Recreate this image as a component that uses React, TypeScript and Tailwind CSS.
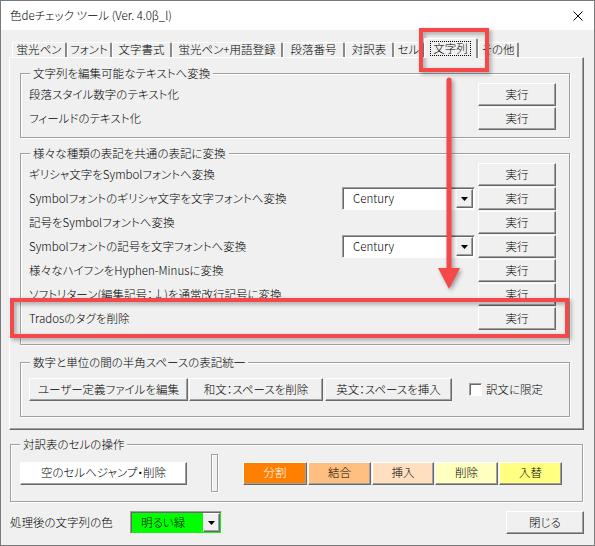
import React from 'react';

const raised =
  'border border-t-white border-l-white border-r-[#696969] border-b-[#696969] shadow-[inset_-1px_-1px_0_#a0a0a0]';
const sunken =
  'border border-t-[#a0a0a0] border-l-[#a0a0a0] border-r-white border-b-white shadow-[inset_1px_1px_0_#696969]';

const Btn: React.FC<{ className: string; children: React.ReactNode }> = ({ className, children }) => (
  <div className={`h-[23px] shrink-0 flex items-center justify-center text-[11.5px] leading-none ${raised} ${className}`}>
    {children}
  </div>
);

const Arrow = () => (
  <svg width="7" height="4" viewBox="0 0 7 4">
    <path d="M0 0 H7 L3.5 4 Z" fill="#000" />
  </svg>
);

const Combo: React.FC<{ className: string; text: string }> = ({ className, text }) => (
  <div className={`h-[23px] shrink-0 flex items-center ${sunken} ${className}`}>
    <span className="flex-1 text-[11.5px] pl-[10px]">{text}</span>
    <div className={`w-[17px] h-[19px] mr-[1px] bg-[#f0f0f0] flex items-center justify-center ${raised}`}>
      <Arrow />
    </div>
  </div>
);

const Group: React.FC<{ label: string; className: string; children: React.ReactNode }> = ({ label, className, children }) => (
  <div className={`relative border border-[#a0a0a0] shadow-[1px_1px_0_white,inset_1px_1px_0_white] ${className}`}>
    <span className="absolute left-[9px] top-[-9px] px-[3px] bg-[#f0f0f0] text-[11.5px] leading-[16px]">{label}</span>
    {children}
  </div>
);

const Row: React.FC<{ label: string; combo?: boolean }> = ({ label, combo }) => (
  <div className="h-[24px] flex items-start">
    <span className="flex-1 h-[23px] flex items-center text-[11.5px]">{label}</span>
    {combo && <Combo className="w-[133px] mr-[3px] bg-white" text="Century" />}
    <Btn className="w-[78px] bg-[#f0f0f0]">実行</Btn>
  </div>
);

const tabs: { t: string; w: string; sel?: boolean }[] = [
  { t: '蛍光ペン', w: 'w-[55px]' },
  { t: 'フォント', w: 'w-[45px]' },
  { t: '文字書式', w: 'w-[60px]' },
  { t: '蛍光ペン+用語登録', w: 'w-[111px]' },
  { t: '段落番号', w: 'w-[62px]' },
  { t: '対訳表', w: 'w-[49px]' },
  { t: 'セル', w: 'w-[30px]' },
  { t: '文字列', w: 'w-[54px]', sel: true },
  { t: 'その他', w: 'w-[41px]' },
];

export default function App() {
  return (
    <div className="relative w-[595px] h-[546px] bg-[#f0f0f0] border border-[#7a7a7a] flex flex-col text-black font-light font-['Noto_Sans_CJK_JP','Noto_Sans',sans-serif] [font-feature-settings:'palt'] overflow-hidden">
      {/* title bar */}
      <div className="h-[29px] bg-white flex items-center justify-between pl-[9px] pr-[11px]">
        <span className="text-[11.5px]">色deチェック ツール (Ver. 4.0β_l)</span>
        <svg width="10" height="10" viewBox="0 0 10 10">
          <path d="M0.5 0.5 L9.5 9.5 M9.5 0.5 L0.5 9.5" stroke="#000" strokeWidth="1" />
        </svg>
      </div>

      {/* tabs + page */}
      <div className="pl-[8px] pr-[10px] pt-[8px]">
        <div className="h-[19px] flex items-end pl-[3px]">
          {tabs.map((tab) => (
            <div
              key={tab.t}
              className={`${tab.w} shrink-0 flex items-center justify-center text-[11.5px] border-t border-l border-r-2 border-t-white border-l-white border-r-[#8a8a8a] rounded-t-[2px] ${
                tab.sel ? 'h-[20px] -mb-[1px] relative z-10 bg-[#f0f0f0]' : 'h-[15px]'
              }`}
            >
              {tab.sel ? (
                <span className="border border-dotted border-black px-[2px] leading-[13px]">{tab.t}</span>
              ) : (
                tab.t
              )}
            </div>
          ))}
        </div>

        <div className="h-[373px] border border-t-white border-l-white border-r-[#696969] border-b-[#696969] shadow-[inset_-1px_-1px_0_#a0a0a0] pl-[10px] pr-[13px] pt-[15px] flex flex-col">
          <Group label="文字列を編集可能なテキストへ変換" className="pt-[9px] pb-[6px] pl-[8px] pr-[13px]">
            <Row label="段落スタイル数字のテキスト化" />
            <Row label="フィールドのテキスト化" />
          </Group>

          <Group label="様々な種類の表記を共通の表記に変換" className="mt-[15px] pt-[9px] pb-[13px] pl-[8px] pr-[13px]">
            <Row label="ギリシャ文字をSymbolフォントへ変換" />
            <Row label="Symbolフォントのギリシャ文字を文字フォントへ変換" combo />
            <Row label="記号をSymbolフォントへ変換" />
            <Row label="Symbolフォントの記号を文字フォントへ変換" combo />
            <Row label="様々なハイフンをHyphen-Minusに変換" />
            <Row label="ソフトリターン(編集記号：↓)を通常改行記号に変換" />
            <Row label="Tradosのタグを削除" />
          </Group>

          <Group label="数字と単位の間の半角スペースの表記統一" className="mt-[17px] py-[15px] pl-[8px] pr-[13px]">
            <div className="flex items-center">
              <Btn className="w-[159px] bg-[#f0f0f0]">ユーザー定義ファイルを編集</Btn>
              <Btn className="w-[134px] ml-[1px] bg-[#f0f0f0]">和文：スペースを削除</Btn>
              <Btn className="w-[127px] ml-[2px] bg-[#f0f0f0]">英文：スペースを挿入</Btn>
              <div className={`w-[13px] h-[13px] ml-[17px] bg-white ${sunken}`} />
              <span className="ml-[4px] text-[11.5px]">訳文に限定</span>
            </div>
          </Group>
        </div>
      </div>

      {/* cell operations */}
      <Group label="対訳表のセルの操作" className="mt-[14px] ml-[9px] mr-[11px] py-[9px] pl-[9px]">
        <div className="h-[38px] flex items-center">
          <Btn className="w-[167px] bg-white">空のセルへジャンプ・削除</Btn>
          <div className="w-[7px] h-[38px] ml-[24px] border border-[#a0a0a0] shadow-[1px_1px_0_white,inset_1px_1px_0_white]" />
          <Btn className="w-[64px] ml-[25px] bg-[#ff8000] text-white">分割</Btn>
          <Btn className="w-[63px] ml-[1px] bg-[#ffbf80]">結合</Btn>
          <Btn className="w-[62px] ml-[1px] bg-[#ffdfc0]">挿入</Btn>
          <Btn className="w-[63px] ml-[1px] bg-[#ffffc0]">削除</Btn>
          <Btn className="w-[63px] ml-[1px] bg-[#ffff80]">入替</Btn>
        </div>
      </Group>

      {/* bottom */}
      <div className="mt-[9px] pl-[9px] pr-[10px] flex items-center">
        <span className="text-[11.5px] w-[120px]">処理後の文字列の色</span>
        <Combo className="w-[92px] h-[21px] bg-[#00ff00]" text="明るい緑" />
        <div className="flex-1" />
        <Btn className="w-[78px] bg-[#f0f0f0]">閉じる</Btn>
      </div>

      {/* red annotations */}
      <svg
        className="absolute left-0 top-0 pointer-events-none"
        width="595"
        height="546"
        style={{ filter: 'drop-shadow(2px 2px 2px rgba(0,0,0,0.35))' }}
      >
        <rect x="420" y="29" width="66" height="40" fill="none" stroke="#f54848" strokeWidth="4" />
        <rect x="11" y="299" width="555" height="36" fill="none" stroke="#f54848" strokeWidth="4" />
        <line x1="448" y1="79" x2="448" y2="270" stroke="#f54848" strokeWidth="5" strokeLinecap="round" />
        <path d="M437 267 L459 267 L448 288 Z" fill="#f54848" />
      </svg>
    </div>
  );
}
